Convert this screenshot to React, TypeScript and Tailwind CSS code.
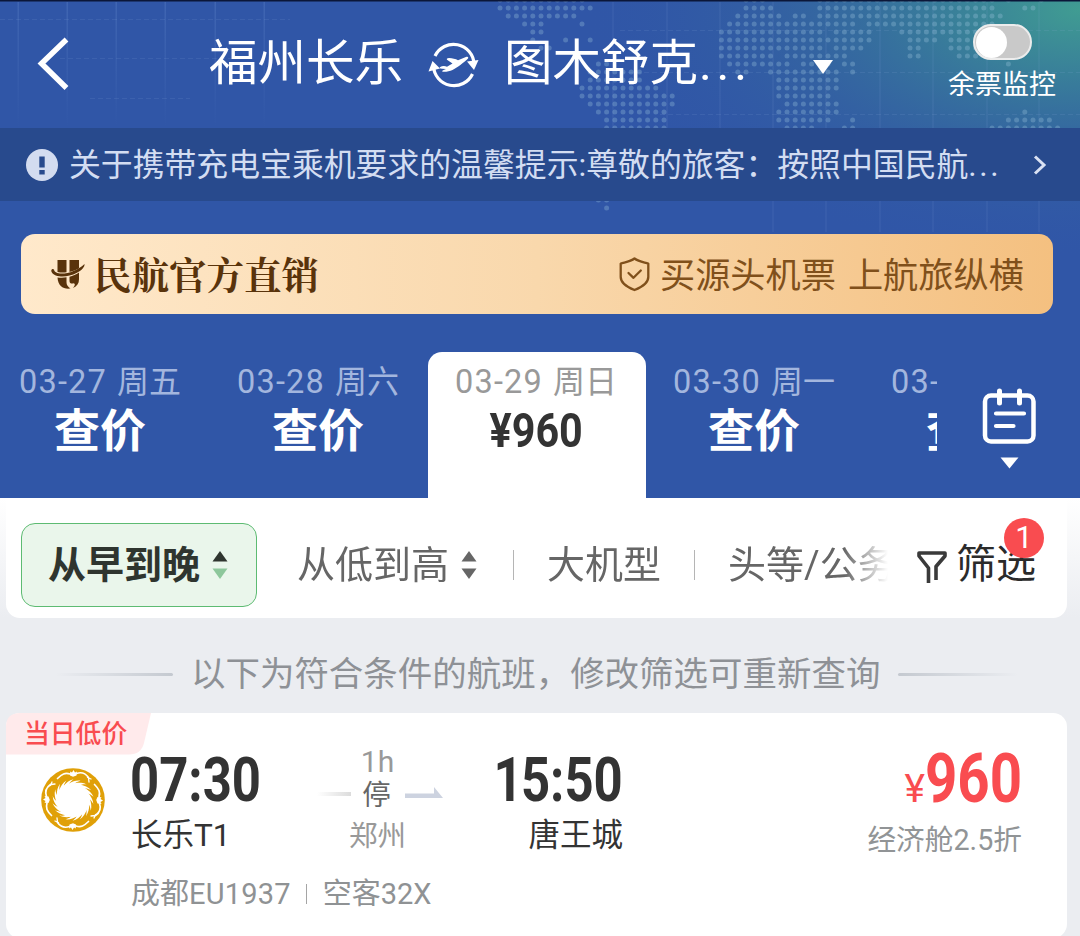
import React from "react";

const MAP_ROWS: [number, number[][]][] = [
  [0, [[-5, 5], [25, 27], [34, 55], [57, 57], [61, 61]]],
  [1, [[-5, 6], [25, 28], [34, 55], [59, 60]]],
  [2, [[-4, 4], [24, 29], [31, 32], [34, 56]]],
  [3, [[-2, 0], [5, 5], [23, 38], [40, 55]]],
  [4, [[-1, 0], [22, 34], [36, 40], [44, 55]]],
  [5, [[-1, -1], [3, 3], [6, 6], [22, 40], [45, 48], [50, 55]]],
  [6, [[0, 1], [22, 34], [36, 39], [45, 46], [50, 55]]],
  [7, [[22, 28], [30, 37], [45, 46], [51, 53]]],
  [8, [[7, 8], [23, 30], [32, 35], [37, 38], [57, 57]]],
  [9, [[6, 12], [24, 25], [28, 36], [38, 38]]],
  [10, [[6, 12], [29, 36]]],
  [11, [[5, 14], [29, 36]]],
  [12, [[5, 16], [29, 35]]],
  [13, [[6, 16], [30, 36]]],
  [14, [[7, 15], [29, 36], [59, 59]]],
  [15, [[8, 15], [29, 35], [38, 38], [57, 62]]],
  [16, [[8, 15], [30, 33], [37, 38], [55, 63]]],
  [25, [[7, 8]]],
  [26, [[8, 8]]],
];

function HeaderBackdrop() {
  const dots: React.ReactNode[] = [];
  MAP_ROWS.forEach(([row, spans]) =>
    spans.forEach(([from, to]) => {
      for (let col = from; col <= to; col++) {
        dots.push(<circle key={`${row}:${col}`} cx={541 + col * 8.2} cy={row * 8} r={2.5} />);
      }
    }),
  );
  return (
    <svg className="absolute inset-0" width="1080" height="498" viewBox="0 0 1080 498">
      <defs>
        <radialGradient id="teal" gradientUnits="userSpaceOnUse" cx="1080" cy="10" r="500" gradientTransform="translate(1080 10) scale(1 .5) translate(-1080 -10)">
          <stop offset="0" stopColor="#409c92" />
          <stop offset=".25" stopColor="#3a8498" stopOpacity=".92" />
          <stop offset=".6" stopColor="#35689f" stopOpacity=".6" />
          <stop offset="1" stopColor="#3056a7" stopOpacity="0" />
        </radialGradient>
        <linearGradient id="fadeDown" gradientUnits="userSpaceOnUse" x1="0" y1="0" x2="0" y2="128">
          <stop offset="0" stopColor="#7fa4e0" stopOpacity=".2" />
          <stop offset="1" stopColor="#7fa4e0" stopOpacity="0" />
        </linearGradient>
      </defs>
      <rect width="1080" height="498" fill="url(#teal)" />
      <g fill="#9cc4dc" fillOpacity=".32">{dots}</g>
      <g fill="url(#fadeDown)">
        {[18, 67, 116, 165, 215, 264].map((x) => (
          <rect key={x} x={x - 0.5} y="2" width="1.5" height="126" />
        ))}
      </g>
      <g stroke="#8fb4e0" strokeOpacity=".1" strokeWidth="1.5">
        {[613, 667, 720, 773, 826, 880, 933, 987, 1039].map((x) => (
          <path key={x} d={x < 770 ? `M${x} 2V128` : `M${x} 2V232`} />
        ))}
      </g>
      <g stroke="#8fb4e0" strokeOpacity=".13" strokeWidth="1" strokeDasharray="5 3">
        <path d="M0 19.5H290M60 58.500H240M90 98.500H190M620 30.500H1080M620 72.500H1080M660 114.500H1080" />
      </g>
      <rect width="1080" height="1.500" fill="#0b1638" />
    </svg>
  );
}

function SwapPlane() {
  return (
    <svg className="-mt-px" width="52" height="50" viewBox="0 0 52 50" fill="none">
      <path d="M7 17A20.500 20.500 0 0 1 46 25" stroke="#fff" strokeWidth="3.200" />
      <path d="M5.500 27A20.500 20.500 0 0 0 44.500 35" stroke="#fff" strokeWidth="3.200" />
      <path d="M39 22.500L50.500 21L46 31Z" fill="#fff" />
      <path d="M.5 32.500L4.500 22L12 29.500Z" fill="#fff" />
      <path d="M38.500 17.800c1.300-.6 2.500.6 1.300 1.900C36 23.500 29 28.500 24.500 31c-3.500 1.700-9 2.300-10.300 1.400-.6-.5 1-1.300 3.800-2.400l-4-.3c-2.200-.2-3-1-1.800-1.800 1.800-1 4.300-1.400 6.800-.2l5.500-3.200-5.500-3.700c-.8-.8.5-1.700 2-1.700 3.500 0 6.500 1 9 2.200z" fill="#fff" />
    </svg>
  );
}

function Crest() {
  return (
    <svg width="34" height="31" viewBox="0 0 34 31">
      <g fill="#59330b">
        <path d="M6.500 1h9v12.300c-3 .4-6 .3-9-.3zM18.500 1H28v8.200c-3 1.900-6 3-9.500 3.700z" />
        <path d="M.3 11.500c.3-1.600 2-2 2.800-.7C3 12.300 5 14.200 9 14.500 17 15 26.500 11.500 33.500 5c.4 2.800-2.700 6.300-7.500 8.700-6 3-12 4.300-17.700 3.600C3 16.500.2 14 .3 11.500z" />
        <path d="M6.500 18.400c3 .6 6 .5 9-.1v5c0 2.700 1.500 4.700 4 6.200C12.500 30.500 7 27 6.500 18.400zM18.500 17.700c3.300-.8 6.500-2.200 9.500-4.200v6.800c0 4.200-2 7.200-6 8.700 2.200-2.500 2.400-4.500.5-4.700-1.700.7-4 .2-4-2.300z" />
      </g>
    </svg>
  );
}

function ShieldCheck() {
  return (
    <svg width="31" height="35" viewBox="0 0 31 35" fill="none" stroke="#80501b" strokeWidth="2.300" strokeLinecap="round" strokeLinejoin="round">
      <path d="M15.500 1.500C11.500 4.500 7 5 1.700 6.500V20c0 6.500 6 10 13.800 13 7.800-3 13.800-6.500 13.800-13V6.500C24 5 19.500 4.500 15.500 1.500z" />
      <path d="M9.500 16l5 4.800 7.300-7.300" />
    </svg>
  );
}

function CalendarIcon() {
  return (
    <svg width="54" height="82" viewBox="0 0 54 82" fill="none" stroke="#fff" strokeLinecap="round">
      <rect x="3" y="7.500" width="48.500" height="46" rx="6" strokeWidth="4.500" />
      <path d="M17.500 3v12M37.500 3v12" strokeWidth="5" />
      <path d="M14 25.500h28M14 38h17.500" strokeWidth="4.200" />
      <path d="M18.500 69.500h18l-9 11z" fill="#fff" stroke="none" />
    </svg>
  );
}

function SortArrows({ down, up }: { down: string; up: string }) {
  return (
    <svg width="16" height="28" viewBox="0 0 16 28">
      <path d="M8 0l7.500 10.500H.5z" fill={up} />
      <path d="M8 28L.5 17.500h15z" fill={down} />
    </svg>
  );
}

function AirlineLogo() {
  const flames = Array.from({ length: 18 }, (_, i) => i * 20);
  const birds = [0, 90, 180, 270];
  return (
    <svg width="64" height="64" viewBox="-32 -32 64 64">
      <circle r="31.800" fill="#e0a008" />
      <circle r="17" fill="#fff" />
      {flames.map((a) => (
        <path key={a} transform={`rotate(${a})`} d="M-4 -16.500C-.5 -18.300 3 -19.800 7.500 -19.300C4.500 -18.500 2 -17.200 .5 -15z" fill="#fff" />
      ))}
      {birds.map((a) => (
        <g key={a} transform={`rotate(${a})`}>
          <path d="M-2.800 -28.500L-1 -27.500L.5 -30L2 -27.500L4 -28.500L3.500 -24.500L0 -23.200L-3 -24.500z" fill="#fff" />
          <path d="M-3 -26C-8 -27.500 -11 -26 -15.500 -21.500M3.500 -26.500C9 -28.500 13 -26 15.500 -22.500" stroke="#fff" strokeWidth="1.700" strokeLinecap="round" fill="none" />
          <path d="M14.500 -22.500l3.500 1.500M15.500 -22l.5 4" stroke="#fff" strokeWidth="1.300" strokeLinecap="round" />
        </g>
      ))}
    </svg>
  );
}

const DAYS = [
  { date: "03-27", weekday: "周五", value: "查价" },
  { date: "03-28", weekday: "周六", value: "查价" },
  { date: "03-29", weekday: "周日", value: "¥960", active: true },
  { date: "03-30", weekday: "周一", value: "查价" },
  { date: "03-31", weekday: "周二", value: "查价" },
];

export default function App() {
  return (
    <div className="flex h-[936px] w-[1080px] flex-col overflow-hidden bg-[#ebedf1] font-['Roboto','Noto_Sans_CJK_SC',sans-serif] whitespace-nowrap">
      <header className="relative h-[498px] shrink-0 bg-[#3056a7]">
        <HeaderBackdrop />
        <div className="relative flex h-full flex-col">
          <div className="flex h-[128px] shrink-0 items-start text-white">
            <svg className="mt-[37px] ml-[37px]" width="32" height="54" viewBox="0 0 32 54" fill="none" stroke="#fff" strokeWidth="5.500">
              <path d="M29.500 2.500L4.500 26.500l25 24.500" />
            </svg>
            <div className="mt-[28px] ml-[140px] flex h-[72px] items-center text-[48.500px] leading-[72px]">
              <span className="w-[219px]">福州长乐</span>
              <SwapPlane />
              <span className="ml-[24px] w-[309px]">
                图木舒克<span className="ml-px tracking-[4.800px]">...</span>
              </span>
            </div>
            <svg className="mt-[60px]" width="20" height="14" viewBox="0 0 20 14">
              <path d="M0 0h20l-10 14z" fill="#fff" />
            </svg>
            <div className="mt-[24px] ml-[115px] flex flex-col items-center">
              <div className="flex h-[36px] w-[59px] items-center rounded-full border-2 border-[#ececec] bg-[#c9c9c9]">
                <div className="ml-px size-[31px] rounded-full bg-white" />
              </div>
              <span className="mt-[6px] text-[27px] leading-[38px]">余票监控</span>
            </div>
          </div>

          <div className="flex h-[73px] shrink-0 items-center bg-[#284a8d] pl-[26px] text-[#d3ddf2]">
            <svg width="32" height="32" viewBox="0 0 32 32">
              <circle cx="16" cy="16" r="16" fill="#d3dcf0" />
              <path d="M13.300 7.500h5.400v11h-5.400zM13.300 21h5.400v4.500h-5.400z" fill="#284a8d" />
            </svg>
            <span className="ml-[11px] w-[964px] text-[31.850px] leading-[48px]">
              关于携带充电宝乘机要求的温馨提示:尊敬的旅客：按照中国民航<span className="tracking-[2.500px]">...</span>
            </span>
            <svg width="14" height="20" viewBox="0 0 14 20" fill="none" stroke="#d9e1f3" strokeWidth="3">
              <path d="M2 1.500l9 8.500-9 8.500" />
            </svg>
          </div>

          <div className="mt-[33px] ml-[21px] flex h-[80px] w-[1032px] shrink-0 items-center rounded-[14px] bg-linear-to-r from-[#ffe9cb] via-[#f9d8ac] to-[#f4c080] pl-[30px]">
            <Crest />
            <span className="-mt-[2px] ml-[9px] w-[525px] font-['Noto_Serif_CJK_SC','Noto_Sans_CJK_SC',serif] text-[37.500px] leading-[56px] font-bold text-[#59330b]">
              民航官方直销
            </span>
            <ShieldCheck />
            <span className="mt-[4px] ml-[10px] text-[35.200px] leading-[52px] text-[#80501b]">
              买源头机票<span className="ml-[12px]">上航旅纵横</span>
            </span>
          </div>

          <div className="mt-[38px] flex min-h-0 flex-1">
            <div className="w-[937px] overflow-hidden">
              <div className="-ml-[8px] flex h-full">
                {DAYS.map((d) => (
                  <div
                    key={d.date}
                    className={
                      d.active
                        ? "flex w-[218px] shrink-0 flex-col items-center rounded-t-[14px] bg-white pr-[2px] text-[#999]"
                        : "flex w-[218px] shrink-0 flex-col items-center pr-[2px] text-[#a3b6de]"
                    }
                  >
                    <span className="mt-[7px] flex text-[32.500px] leading-[46px]">
                      <span className="tracking-[1.200px]">{d.date}</span>
                      <span className="ml-[10px] text-[32px]">{d.weekday}</span>
                    </span>
                    {d.active ? (
                      <span className="mt-[-4px] scale-x-[0.86] text-[48px] leading-[60px] font-bold text-[#333]">{d.value}</span>
                    ) : (
                      <span className="mt-[-4px] text-[46px] leading-[60px] font-bold text-white">{d.value}</span>
                    )}
                  </div>
                ))}
              </div>
            </div>
            <div className="mt-[36px] ml-[45px]">
              <CalendarIcon />
            </div>
          </div>
        </div>
      </header>

      <div className="shrink-0 bg-linear-to-b from-white to-[#ebedf1] pr-[13px] pl-[6px]">
        <div className="flex h-[120px] items-center rounded-b-[14px] bg-white pl-[15px] text-[38px] leading-[56px]">
          <div className="mt-[25px] flex h-[84px] w-[236px] items-center self-start rounded-[14px] border-[1.500px] border-[#5dbb72] bg-[#eaf6eb] pl-[26px] font-bold text-[#2f352f]">
            从早到晚
            <span className="ml-[12px]">
              <SortArrows up="#2f352f" down="#8dc79b" />
            </span>
          </div>
          <div className="mt-[13px] flex w-[631px] items-center overflow-hidden mask-r-from-93% pl-[40px] text-[#666]">
            从低到高
            <span className="ml-[12px]">
              <SortArrows up="#666" down="#666" />
            </span>
            <i className="ml-[36px] h-[30px] w-px shrink-0 bg-[#b5b5b5]" />
            <span className="ml-[33px]">大机型</span>
            <i className="ml-[33px] h-[30px] w-px shrink-0 bg-[#b5b5b5]" />
            <span className="ml-[33px]">头等/公务舱</span>
          </div>
          <div className="relative mt-[13px] ml-[29px] flex items-center text-[40px] text-[#2b2b2b]">
            <svg className="mt-[4px]" width="30" height="32" viewBox="0 0 30 32" fill="none" stroke="#3a3a3a" strokeWidth="3.600" strokeLinejoin="round">
              <path d="M11.500 32V17L2 5V2h26v3L19 15.500V29" />
            </svg>
            <span className="mt-px ml-[9px]">筛选</span>
            <div className="absolute -top-[18px] left-[87px] flex size-[40px] items-center justify-center rounded-full bg-[#f94c50] text-[31px] leading-[40px] text-white">
              1
            </div>
          </div>
        </div>
      </div>

      <div className="flex h-[95px] shrink-0 items-center pt-[17px] pl-[56px] text-[34.480px] leading-[50px] text-[#8e9196]">
        <div className="h-[3px] w-[117px] rounded-full bg-linear-to-r from-[#ebedf1] to-[#c4c9d0]" />
        <span className="mr-[18px] ml-[18px]">以下为符合条件的航班，修改筛选可重新查询</span>
        <div className="h-[3px] w-[120px] rounded-full bg-linear-to-l from-[#ebedf1] to-[#c4c9d0]" />
      </div>

      <article className="relative ml-[6px] flex h-[225px] w-[1061px] shrink-0 rounded-[14px] bg-white">
        <div className="absolute top-0 left-0">
          <svg className="absolute top-0 left-0" width="146" height="42" viewBox="0 0 146 42">
            <path d="M0 14Q0 0 14 0H145L138 30Q135 41.500 123 41.500H0z" fill="#ffeaeb" />
          </svg>
          <span className="relative mt-[2px] ml-[18px] block text-[25.800px] leading-[38px] font-medium text-[#f94c50]">当日低价</span>
        </div>
        <div className="mt-[55px] ml-[35px] w-[90px]">
          <AirlineLogo />
        </div>
        <div className="flex flex-col">
          <div className="flex h-[160px]">
            <div className="mt-[30px] w-[186px]">
              <div className="-ml-px origin-left scale-x-[0.82] text-[62px] leading-[73px] font-bold text-[#333]">07:30</div>
              <div className="-mt-[3px] text-[31.500px] leading-[46px] text-[#333]">长乐T1</div>
            </div>
            <div className="mt-[30px] flex w-[126px] flex-col items-center text-[28.500px] text-[#999]">
              <span className="ml-[-5px] text-[30px] leading-[38px]">1h</span>
              <div className="flex h-[26px] w-full items-center justify-between">
                <div className="h-[4px] w-[34px] bg-linear-to-r from-white to-[#dcdcdc]" />
                <span className="mt-[3px] ml-[-3px] leading-[26px] text-[#666]">停</span>
                <svg className="-mt-[3px]" width="38" height="12" viewBox="0 0 38 12">
                  <path d="M0 6.500h29V0l9 11H0z" fill="#cdd3e0" />
                </svg>
              </div>
              <span className="mt-[9px] ml-[-5px] leading-[42px]">郑州</span>
            </div>
            <div className="mt-[30px] flex w-[180px] flex-col items-end">
              <div className="origin-right scale-x-[0.82] text-[62px] leading-[73px] font-bold text-[#333]">
                <span className="tracking-[-2px]">1</span>5:50
              </div>
              <div className="-mt-[3px] text-[31.500px] leading-[46px] text-[#333]">唐王城</div>
            </div>
          </div>
          <div className="flex items-center text-[29px] leading-[42px] text-[#8f9294]">
            <span>
              成都<span className="tracking-[0.200px]">EU1937</span>
            </span>
            <i className="mr-[16px] ml-[15px] h-[20px] w-px bg-[#a5a5a5]" />
            空客32X
          </div>
        </div>
        <div className="mt-[26px] mr-[45px] ml-auto flex flex-col items-end">
          <div className="flex items-baseline text-[#f94c50]">
            <span className="-mr-[20px] text-[39px] leading-[40px]">¥</span>
            <span className="origin-right scale-x-[0.83] text-[68px] leading-[80px] font-bold">960</span>
          </div>
          <span className="text-[28.700px] leading-[42px] text-[#919496]">经济舱2.5折</span>
        </div>
      </article>
    </div>
  );
}
